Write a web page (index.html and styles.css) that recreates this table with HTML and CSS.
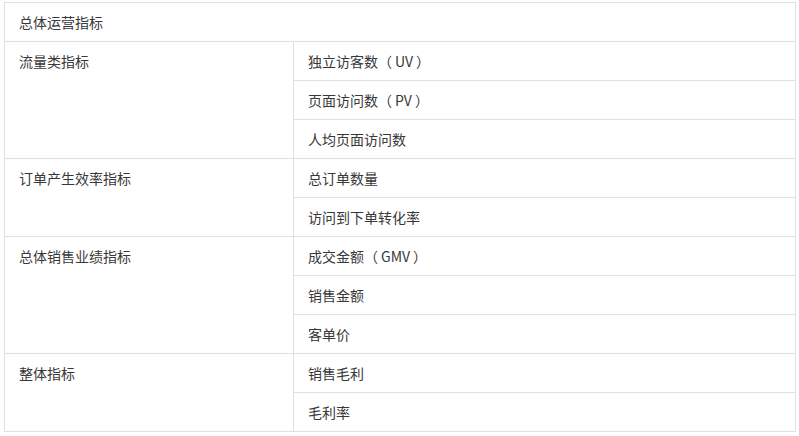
FILE: index.html
```html
<!DOCTYPE html>
<html lang="zh">
<head>
<meta charset="utf-8">
<link rel="stylesheet" href="styles.css">
</head>
<body>
<div class="wrap">
<table class="metrics">
  <colgroup><col class="c1"><col class="c2"></colgroup>
  <tr><td colspan="2">总体运营指标</td></tr>
  <tr><td rowspan="3" class="group">流量类指标</td><td>独立访客数（<span class="abbr">UV</span>）</td></tr>
  <tr><td>页面访问数（<span class="abbr">PV</span>）</td></tr>
  <tr><td>人均页面访问数</td></tr>
  <tr><td rowspan="2" class="group">订单产生效率指标</td><td>总订单数量</td></tr>
  <tr><td>访问到下单转化率</td></tr>
  <tr><td rowspan="3" class="group">总体销售业绩指标</td><td>成交金额（<span class="abbr">GMV</span>）</td></tr>
  <tr><td>销售金额</td></tr>
  <tr><td>客单价</td></tr>
  <tr><td rowspan="2" class="group">整体指标</td><td>销售毛利</td></tr>
  <tr><td>毛利率</td></tr>
</table>
</div>
</body>
</html>
```
FILE: styles.css
```css
html, body { margin: 0; padding: 0; background: #fff; }
.wrap { padding: 2px 0 0 4px; }
.metrics {
  border-collapse: collapse;
  table-layout: fixed;
  width: 791px;
  font-family: "Noto Sans CJK SC", "Microsoft YaHei", sans-serif;
  font-size: 14px;
  color: #383838;
}
.c1 { width: 289px; }
.c2 { width: 502px; }
.metrics td {
  border: 1px solid #e0e0e0;
  height: 38px;
  padding: 0 14px;
  line-height: 38px;
  vertical-align: top;
  box-sizing: border-box;
  white-space: nowrap;
}
.metrics tr { height: 39px; }
.abbr { padding: 0 3px; }
```
